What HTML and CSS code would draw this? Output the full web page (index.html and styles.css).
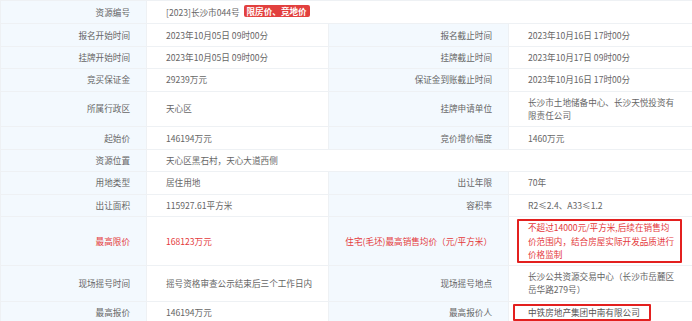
FILE: index.html
```html
<!DOCTYPE html>
<html lang="zh-CN">
<head>
<meta charset="utf-8">
<title>资源信息</title>
<link rel="stylesheet" href="styles.css">
</head>
<body>
<table class="info">
  <colgroup>
    <col class="c1"><col class="c2"><col class="c3"><col class="c4">
  </colgroup>
  <tbody>
    <tr>
      <th>资源编号</th>
      <td colspan="3">[2023]长沙市044号 <span class="badge">限房价、竞地价</span></td>
    </tr>
    <tr>
      <th>报名开始时间</th><td>2023年10月05日 09时00分</td>
      <th>报名截止时间</th><td>2023年10月16日 17时00分</td>
    </tr>
    <tr>
      <th>挂牌开始时间</th><td>2023年10月05日 09时00分</td>
      <th>挂牌截止时间</th><td>2023年10月17日 09时00分</td>
    </tr>
    <tr>
      <th>竞买保证金</th><td>29239万元</td>
      <th>保证金到账截止时间</th><td>2023年10月16日 17时00分</td>
    </tr>
    <tr>
      <th>所属行政区</th><td>天心区</td>
      <th>挂牌申请单位</th><td>长沙市土地储备中心、长沙天悦投资有限责任公司</td>
    </tr>
    <tr>
      <th>起始价</th><td>146194万元</td>
      <th>竞价增价幅度</th><td>1460万元</td>
    </tr>
    <tr>
      <th>资源位置</th>
      <td colspan="3">天心区黑石村，天心大道西侧</td>
    </tr>
    <tr>
      <th>用地类型</th><td>居住用地</td>
      <th>出让年限</th><td>70年</td>
    </tr>
    <tr>
      <th>出让面积</th><td>115927.61平方米</td>
      <th>容积率</th><td>R2≤2.4、A33≤1.2</td>
    </tr>
    <tr class="hot">
      <th>最高限价</th><td>168123万元</td>
      <th>住宅(毛坯)最高销售均价（元/平方米）</th>
      <td><div class="mark mark-block">不超过14000元/平方米,后续在销售均价范围内，结合房屋实际开发品质进行价格监制</div></td>
    </tr>
    <tr>
      <th>现场摇号时间</th><td>摇号资格审查公示结束后三个工作日内</td>
      <th>现场摇号地点</th><td>长沙公共资源交易中心（长沙市岳麓区岳华路279号）</td>
    </tr>
    <tr>
      <th>最高报价</th><td>146194万元</td>
      <th>最高报价人</th><td><span class="mark mark-inline">中铁房地产集团中南有限公司</span></td>
    </tr>
  </tbody>
</table>
</body>
</html>
```
FILE: styles.css
```css
html, body {
  margin: 0;
  padding: 0;
  background: #ffffff;
}

.info {
  width: 692px;
  border-collapse: collapse;
  table-layout: fixed;
  font-family: "Noto Sans CJK SC", "Noto Sans", sans-serif;
  font-size: 8.6px;
  line-height: 13.25px;
  color: #666666;
}

.c1 { width: 146px; }
.c2 { width: 182px; }
.c3 { width: 180px; }
.c4 { width: 184px; }

.info th,
.info td {
  border: 1px solid #eef1f4;
  padding: 4.1px 8px 4.1px 19px;
  vertical-align: middle;
  font-weight: normal;
}

.info th {
  background: #f3f9fe;
  text-align: right;
  padding: 4.1px 16px 4.1px 10px;
}

.info td:last-child {
  padding-right: 11px;
}

.hot th,
.hot td,
.hot td:last-child {
  color: #e4393c;
}

.badge {
  display: inline-block;
  margin-left: 2px;
  padding: 0 3px;
  background: #e2403e;
  color: #ffffff;
  font-weight: bold;
  border-radius: 2px;
  line-height: 12px;
  vertical-align: 1px;
}

.mark {
  border: 2px solid #e3201f;
  border-radius: 1px;
}

.mark-block {
  margin: -2px -1px -2px -11px;
  padding: 0 4px 0 9px;
}

.mark-inline {
  display: inline-block;
  margin: -2px -2px -2px -15px;
  padding: 0 9px 0 13px;
  color: #555555;
}
```
